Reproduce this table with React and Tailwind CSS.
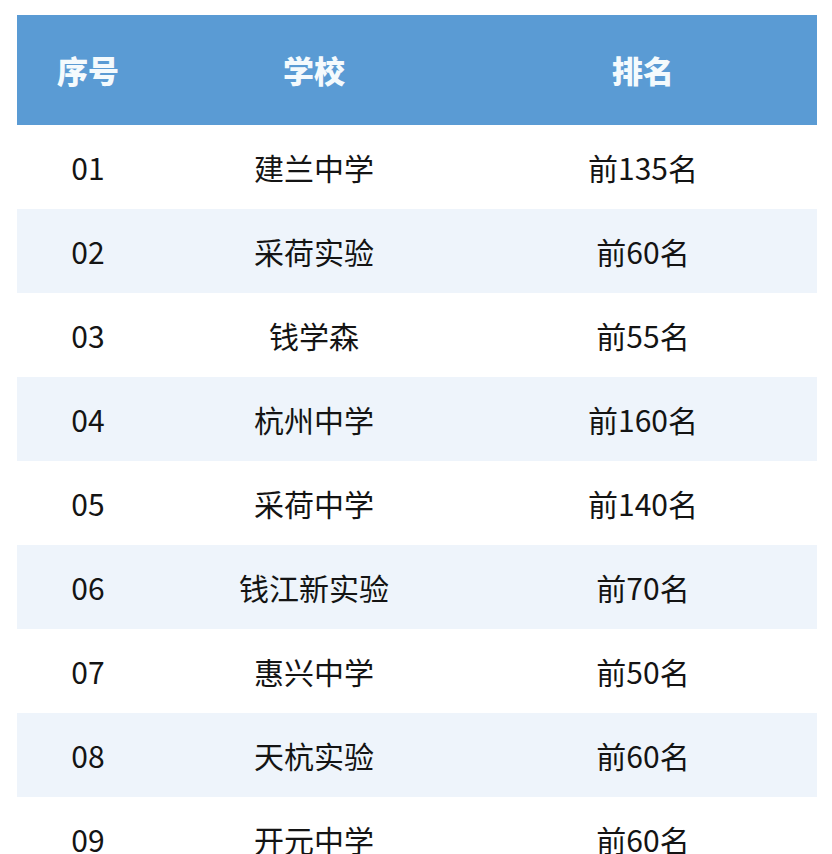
const rows = [
  ["01", "建兰中学", "前135名"],
  ["02", "采荷实验", "前60名"],
  ["03", "钱学森", "前55名"],
  ["04", "杭州中学", "前160名"],
  ["05", "采荷中学", "前140名"],
  ["06", "钱江新实验", "前70名"],
  ["07", "惠兴中学", "前50名"],
  ["08", "天杭实验", "前60名"],
  ["09", "开元中学", "前60名"],
];

export default function App() {
  return (
    <div
      className="w-[832px] h-[854px] overflow-hidden bg-white pt-[15px] pl-[17px]"
      style={{ fontFamily: '"Noto Sans CJK SC", "Noto Sans", sans-serif' }}
    >
      <div className="w-[800px]">
        {/* header */}
        <div className="grid grid-cols-[142px_310px_348px] h-[110px] items-center bg-[#5a9bd4] text-[#f4fafd] text-[31px] font-black">
          <div className="text-center">序号</div>
          <div className="text-center">学校</div>
          <div className="text-center">排名</div>
        </div>

        {/* rows */}
        {rows.map((r, i) => (
          <div
            key={r[0]}
            className={
              "grid grid-cols-[142px_310px_348px] h-[84px] items-center text-[30px] text-[#141414] " +
              (i % 2 === 1 ? "bg-[#eef4fb]" : "bg-white")
            }
          >
            <div className="text-center">{r[0]}</div>
            <div className="text-center">{r[1]}</div>
            <div className="text-center">{r[2]}</div>
          </div>
        ))}
      </div>
    </div>
  );
}
